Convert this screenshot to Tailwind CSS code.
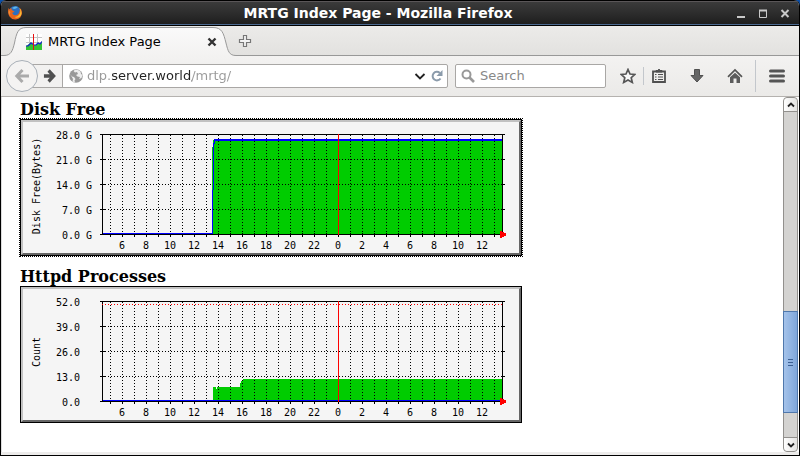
<!DOCTYPE html>
<html lang="en">
<head>
<meta charset="utf-8">
<title>MRTG Index Page</title>
<script src="https://cdn.jsdelivr.net/npm/@tailwindcss/browser@4"></script>
</head>
<body class="h-screen overflow-hidden bg-[#0b4fa8] font-['DejaVu_Sans',sans-serif] text-[13px]">
<div class="flex h-full flex-col overflow-hidden rounded-t-md border-x border-b border-black bg-[#edeceb]">

  <!-- Window title bar -->
  <header class="flex h-[26px] shrink-0 items-center border-y border-black bg-linear-to-b from-[#3c3c3c] via-[#2d2d2d] to-[#1d1d1d] pr-[6px] pl-[6px] shadow-[inset_0_1px_#5a5658,inset_0_-1px_#4c6a90]">
    <svg class="size-4" viewBox="0 0 16 16" aria-hidden="true">
      <circle cx="8" cy="7.5" r="6.5" fill="#2a6fc0"/>
      <path d="M5 3Q8 .5 11 2Q9 4 7 4Z" fill="#5fb7ec"/>
      <path d="M1.5 3Q.3 8 2.5 11.500Q5 15 9 14.500Q14.500 13.500 15 8Q15 4.500 12.500 2.500Q13.500 5.500 12 8Q10 11 7 10Q5 9 5.500 7.500L7.500 7Q7.500 6 5.500 5.500Q4 4.500 4.500 3Q3 3.500 2.500 4.500Z" fill="#e8641b"/>
      <path d="M12.500 3Q14 6 13 8.500Q11 12 7.500 12Q11 14 14 10.500Q15.500 6.500 12.500 3Z" fill="#f9bd36"/>
      <path d="M1.700 5Q1 9 4 11.500Q2 9 3.500 7Z" fill="#f68d2d"/>
    </svg>
    <h1 class="flex-1 text-center text-sm font-bold text-white">MRTG Index Page - Mozilla Firefox</h1>
    <div class="flex gap-1.5">
      <button class="size-4" aria-label="Minimize"><svg viewBox="0 0 16 16" stroke="#c9c9c9" stroke-width="2" fill="none"><path d="M4 12H12"/></svg></button>
      <button class="size-4" aria-label="Maximize"><svg viewBox="0 0 16 16" stroke="#c9c9c9" fill="none"><path d="M4.500 5V12.500H11.500V5"/><path d="M4 5.500H12" stroke-width="2"/></svg></button>
      <button class="size-4" aria-label="Close window"><svg viewBox="0 0 16 16" stroke="#c9c9c9" stroke-width="2" fill="none"><path d="M4.500 5L11.500 12M11.500 5L4.500 12"/></svg></button>
    </div>
  </header>

  <!-- Tab strip -->
  <nav class="flex h-[30px] shrink-0 items-center bg-linear-to-b from-[#ecebe9] to-[#e2e1df] shadow-[inset_0_-1px_#989898]" aria-label="Tabs">
    <div class="relative flex h-full w-[235px] items-center pt-px pr-[18px] pl-[25px]">
      <svg class="absolute inset-0 h-full w-full" viewBox="0 0 235 30" preserveAspectRatio="none" aria-hidden="true">
        <defs><linearGradient id="tab" x2="0" y2="1"><stop stop-color="#fafafa"/><stop offset="1" stop-color="#f3f2f1"/></linearGradient></defs>
        <path d="M0 30V29.500H3C10 29.500 11.500 25 13.500 17C15.500 7 17 1.500 25 1.500H212C221 1.500 222.500 7 225 17C227 25 228 29.500 235 29.500V30Z" fill="url(#tab)"/>
        <path d="M0 29.500H3C10 29.500 11.500 25 13.500 17C15.500 7 17 1.500 25 1.500H212C221 1.500 222.500 7 225 17C227 25 228 29.500 235 29.500" fill="none" stroke="#999"/>
      </svg>
      <svg class="relative size-4 shrink-0" viewBox="0 0 16 16" aria-hidden="true">
        <path fill="#fff" d="M0 0H16V16H0Z"/>
        <path d="M0 3.500H16M0 8.500H16M3.500 0V12M11.500 0V12" stroke="#c4c4c4" fill="none"/>
        <path d="M0 12L3 10L5 8L8 11L10 11L12 8L14 10L16 7V16H0Z" fill="#35c435"/>
        <path d="M0 12H2L5 9L8 11H10L12 9L14 10L16 7.500" stroke="#1818d8" stroke-width="1.200" fill="none"/>
        <path d="M7.500 0V16" stroke="#e81010"/>
      </svg>
      <a href="#" class="relative flex-1 pl-[6px] text-black">MRTG Index Page</a>
      <button class="relative size-3" aria-label="Close tab"><svg viewBox="0 0 12 12" stroke="#333" stroke-width="2.400" fill="none"><path d="M2.500 2.500L9.500 9.500M9.500 2.500L2.500 9.500"/></svg></button>
    </div>
    <button class="ml-px size-4" aria-label="New tab"><svg viewBox="0 0 16 16" fill="#f4f4f4" stroke="#777" stroke-width="1.200"><path d="M6.500 2.500H9.500V6.500H13.500V9.500H9.500V13.500H6.500V9.500H2.500V6.500H6.500Z"/></svg></button>
  </nav>

  <!-- Navigation toolbar -->
  <div class="flex h-[41px] shrink-0 items-center border-b border-[#b5b2af] bg-linear-to-b from-[#f3f2f1] to-[#ebeae8] pr-[14px] pl-[5px]">
    <button class="relative z-10 flex size-8 shrink-0 items-center justify-center rounded-full border border-[#a9b0b8] bg-[#f4f3f2]" aria-label="Back">
      <svg class="size-4" viewBox="0 0 16 16" fill="none" stroke="#aaa" stroke-width="3"><path d="M15 8H4M8.500 2L2.800 8L8.500 14"/></svg>
    </button>
    <div class="-ml-2 flex h-6 min-w-0 flex-1 items-center rounded-r-xs border border-[#a9a7a5] bg-white">
      <button class="flex h-full w-8 shrink-0 items-center justify-end border-r border-[#a9a7a5] bg-[#f2f1f0] pr-[6px]" aria-label="Forward">
        <svg class="h-[14px] w-[13px]" viewBox="0 0 14 14" preserveAspectRatio="none" fill="none" stroke="#505050" stroke-width="3.400"><path d="M1 7H10M6 1.500L11.500 7L6 12.500"/></svg>
      </button>
      <svg class="ml-[6px] size-[14px] shrink-0" viewBox="0 0 14 14" aria-hidden="true">
        <circle cx="7" cy="7" r="6.800" fill="#999"/>
        <path d="M6 0.800L4.500 2L6 3.500L8 3L9 5L7 6L8.500 7.500L11 8L10 10L12.500 9L13.500 6L12 5L11.500 2.500L9 1ZM1 5L3 7.500L5 8L6.500 10L5.500 11.500L6 13.500L3.500 12.500L4 10Z" fill="#eee"/>
      </svg>
      <input class="ml-[4px] min-w-0 flex-1 bg-[linear-gradient(90deg,#999_24px,#222_24px,#222_105px,#999_105px)] bg-clip-text text-transparent outline-none" aria-label="Address" value="dlp.server.world/mrtg/">
      <button class="size-3 shrink-0" aria-label="Show history"><svg viewBox="0 0 12 12" fill="none" stroke="#222" stroke-width="1.800"><path d="M1.500 4L6 8.500L10.500 4"/></svg></button>
      <button class="mr-[4px] ml-[5px] size-3 shrink-0" aria-label="Reload"><svg viewBox="0 0 12 12"><path d="M9.500 8.500A4.300 4.300 0 1 1 8.800 2.900" fill="none" stroke="#8b9bab" stroke-width="2"/><path d="M11.500 0V6H5.500Z" fill="#8b9bab"/></svg></button>
    </div>
    <label class="ml-[7px] flex h-6 w-[151px] shrink-0 items-center rounded-xs border border-[#a9a7a5] bg-white pl-[5px]">
      <svg class="size-[14px] shrink-0" viewBox="0 0 14 14" fill="none" stroke="#999" stroke-width="2"><circle cx="5.500" cy="5.500" r="4"/><path d="M8.500 8.500L13 13" stroke-width="2.600"/></svg>
      <input class="ml-[5px] w-0 flex-1 outline-none placeholder:text-[#888]" aria-label="Search" placeholder="Search">
    </label>
    <button class="ml-[14px] size-4 shrink-0" aria-label="Bookmark this page"><svg viewBox="0 0 16 16" fill="#f8f8f8" stroke="#555" stroke-width="1.700"><path d="M8 1.500L10 6L14.800 6.400L11.200 9.700L12.300 14.400L8 12L3.700 14.400L4.800 9.700L1.200 6.400L6 6Z"/></svg></button>
    <span class="ml-[7px] h-[18px] w-px shrink-0 bg-[#c3c7cc]"></span>
    <button class="ml-[7px] size-4 shrink-0" aria-label="Show bookmarks"><svg viewBox="0 0 16 16" fill="none" stroke="#505050"><path d="M2 3.500H14V14H2Z" stroke-width="1.800"/><path d="M5 4V2.500H7L8 1L9 2.500H11V4Z" fill="#505050"/><path d="M4 6.500H5.500M7 6.500H12M4 9H5.500M7 9H12M4 11.500H5.500M7 11.500H12" stroke-width="1.200"/></svg></button>
    <button class="ml-[22px] size-4 shrink-0" aria-label="Downloads"><svg viewBox="0 0 16 16" fill="#666" stroke="#505050"><path d="M5.500 1.500H10.500V7.500H14L8 14L2 7.500H5.500Z"/></svg></button>
    <button class="ml-[22px] size-4 shrink-0" aria-label="Home"><svg viewBox="0 0 16 16"><path d="M1 8.800L8 2L15 8.800" fill="none" stroke="#555" stroke-width="1.700"/><path d="M3 9.300L8 4.800L13 9.300V15H9.500V10.500H6.500V15H3Z" fill="#5c5c5c"/></svg></button>
    <span class="ml-[12px] h-8 w-px shrink-0 bg-[#c3c7cc]"></span>
    <button class="ml-[13px] size-4 shrink-0" aria-label="Open menu"><svg viewBox="0 0 16 16" stroke="#555" stroke-width="3" stroke-linecap="round"><path d="M1.500 3H14.500M1.500 8H14.500M1.500 13H14.500"/></svg></button>
  </div>

  <!-- Page and scrollbar -->
  <div class="mb-[3px] flex min-h-0 flex-1 border-l border-[#ddd] bg-white">
    <main class="flex min-w-0 flex-1 flex-col items-start gap-[11px] overflow-hidden pt-[3px] pl-[18px] text-black">
      <section>
        <h2 class="font-['DejaVu_Serif',serif] text-base leading-[19px] font-bold">Disk Free</h2>
        <a href="#" class="block border border-black outline-1 outline-dotted outline-black">
          <svg class="block h-[135px] w-[500px]" viewBox="0 0 500 135" role="img" aria-label="Disk free over the last day">
            <defs>
              <g id="frame">
                <path fill="#f5f5f5" d="M0 0H500V135H0Z"/>
                <path fill="#c2c2c2" d="M0 0H500L498 2H2V133L0 135Z"/>
                <path fill="#666" d="M500 0V135H0L2 133H498V2Z"/>
              </g>
              <g id="grid" fill="none" stroke="#000" shape-rendering="crispEdges">
                <path stroke-dasharray="1 2" d="M89.500 15V114M101.500 15V114M113.500 15V114M125.500 15V114M137.500 15V114M149.500 15V114M161.500 15V114M173.500 15V114M185.500 15V114M197.500 15V114M209.500 15V114M221.500 15V114M233.500 15V114M245.500 15V114M257.500 15V114M269.500 15V114M281.500 15V114M293.500 15V114M305.500 15V114M317.500 15V114M329.500 15V114M341.500 15V114M353.500 15V114M365.500 15V114M377.500 15V114M389.500 15V114M401.500 15V114M413.500 15V114M425.500 15V114M437.500 15V114M449.500 15V114M461.500 15V114M473.500 15V114M81 39.500H482M81 64.500H482M81 89.500H482"/>
                <path d="M79 14.500H484M79 114.500H484M81.500 14V115M481.500 14V115M79 39.500H84M79 64.500H84M79 89.500H84M480 39.500H484M480 64.500H484M480 89.500H484"/>
                <path stroke-width="4" stroke-dasharray="1 11" d="M89 115H482"/>
              </g>
              <g id="now" fill="#f00" shape-rendering="crispEdges">
                <path d="M317 14H318V115H317Z"/>
                <path d="M479 111H481V112H483V113H485V116H483V117H481V118H479Z"/>
              </g>
              <g id="hours" font-family="DejaVu Sans Mono, monospace" font-size="10" text-anchor="middle">
                <text x="101" y="129">6</text><text x="125" y="129">8</text><text x="149" y="129">10</text><text x="173" y="129">12</text><text x="197" y="129">14</text><text x="221" y="129">16</text><text x="245" y="129">18</text><text x="269" y="129">20</text><text x="293" y="129">22</text><text x="317" y="129">0</text><text x="341" y="129">2</text><text x="365" y="129">4</text><text x="389" y="129">6</text><text x="413" y="129">8</text><text x="437" y="129">10</text><text x="461" y="129">12</text>
              </g>
            </defs>
            <use href="#frame"/>
            <path fill="#00cc00" shape-rendering="crispEdges" d="M191 27H192V20H482V114H191Z"/>
            <use href="#grid"/>
            <path fill="#00f" shape-rendering="crispEdges" d="M82 113H191V70H192V23H193V19H481V21H194V24H193V70H192V114H82Z"/>
            <use href="#now"/>
            <use href="#hours"/>
            <g font-family="DejaVu Sans Mono, monospace" font-size="10">
              <g text-anchor="end"><text x="71" y="19">28.0 G</text><text x="71" y="44">21.0 G</text><text x="71" y="69">14.0 G</text><text x="71" y="94">7.0 G</text><text x="71" y="119">0.0 G</text></g>
              <text transform="translate(19 66) rotate(-90)" text-anchor="middle">Disk Free(Bytes)</text>
            </g>
          </svg>
        </a>
      </section>
      <section>
        <h2 class="font-['DejaVu_Serif',serif] text-base leading-[19px] font-bold">Httpd Processes</h2>
        <a href="#" class="block border border-black">
          <svg class="block h-[135px] w-[500px]" viewBox="0 0 500 135" role="img" aria-label="Httpd processes over the last day">
            <use href="#frame"/>
            <path fill="#00cc00" shape-rendering="crispEdges" d="M192 114V100H195V102H196V100H219V96H220V94H222V92H482V114Z"/>
            <use href="#grid"/>
            <path fill="#00f" shape-rendering="crispEdges" d="M82 113H481V114H82Z"/>
            <path stroke="#f00" stroke-dasharray="1 2" shape-rendering="crispEdges" d="M81 17.500H482"/>
            <use href="#now"/>
            <use href="#hours"/>
            <g font-family="DejaVu Sans Mono, monospace" font-size="10">
              <g text-anchor="end"><text x="59" y="19">52.0</text><text x="59" y="44">39.0</text><text x="59" y="69">26.0</text><text x="59" y="94">13.0</text><text x="59" y="119">0.0</text></g>
              <text transform="translate(19 65) rotate(-90)" text-anchor="middle">Count</text>
            </g>
          </svg>
        </a>
      </section>
    </main>
    <div class="mr-px flex w-[15px] shrink-0 flex-col rounded-sm border border-[#92908d] bg-[#d4d3d1]">
      <button class="flex h-[14px] items-center justify-center rounded-t-sm border-b border-[#92908d] bg-linear-to-r from-white to-[#e4e3e1]" aria-label="Scroll up"><svg class="size-2" viewBox="0 0 8 8" fill="none" stroke="#222" stroke-width="1.800"><path d="M1 5.500L4 2.500L7 5.500"/></svg></button>
      <div class="grow-[200]"></div>
      <div class="-mx-px flex h-[102px] flex-col items-center justify-center gap-[2px] border border-[#5078ac] bg-linear-to-r from-[#a5c3ea] to-[#7fa6da]">
        <span class="h-px w-[5px] bg-[#3c5f92]"></span><span class="h-px w-[5px] bg-[#3c5f92]"></span><span class="h-px w-[5px] bg-[#3c5f92]"></span>
      </div>
      <div class="grow-[24]"></div>
      <button class="flex h-[14px] items-center justify-center rounded-b-sm border-t border-[#92908d] bg-linear-to-r from-white to-[#e4e3e1]" aria-label="Scroll down"><svg class="size-2" viewBox="0 0 8 8" fill="none" stroke="#222" stroke-width="1.800"><path d="M1 2.500L4 5.500L7 2.500"/></svg></button>
    </div>
  </div>
</div>
</body>
</html>
